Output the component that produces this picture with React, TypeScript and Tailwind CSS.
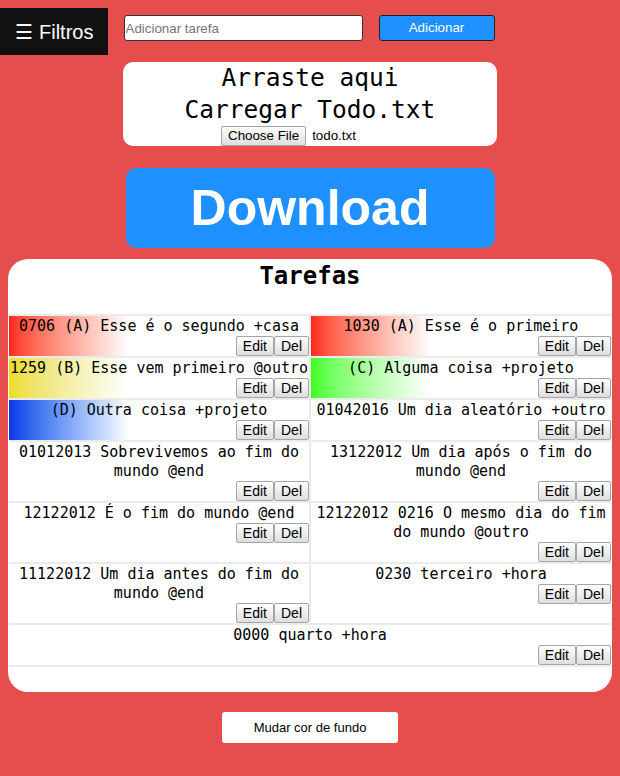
import React from "react";

type Task = { text: string; color?: string; wide?: boolean };

const tasks: Task[] = [
  { text: "0706 (A) Esse é o segundo +casa", color: "red" },
  { text: "1030 (A) Esse é o primeiro", color: "red" },
  { text: "1259 (B) Esse vem primeiro @outro", color: "yellow" },
  { text: "(C) Alguma coisa +projeto", color: "green" },
  { text: "(D) Outra coisa +projeto", color: "blue" },
  { text: "01042016 Um dia aleatório +outro" },
  { text: "01012013 Sobrevivemos ao fim do mundo @end" },
  { text: "13122012 Um dia após o fim do mundo @end" },
  { text: "12122012 É o fim do mundo @end" },
  { text: "12122012 0216 O mesmo dia do fim do mundo @outro" },
  { text: "11122012 Um dia antes do fim do mundo @end" },
  { text: "0230 terceiro +hora" },
  { text: "0000 quarto +hora", wide: true },
];

const bgByColor: Record<string, string> = {
  red: "bg-linear-to-r from-[#ff2419] to-white to-40%",
  yellow: "bg-linear-to-r from-[#ecdc22] to-white to-40%",
  green: "bg-linear-to-r from-[#3aff14] to-white to-40%",
  blue: "bg-linear-to-r from-[#0a36e6] to-white to-40%",
};

const btn =
  "h-5 px-[6px] text-[14px] leading-4 border border-[#a6a6a6] rounded-[2px] bg-linear-to-b from-white to-[#dedede] text-black";

function TaskCell({ task }: { task: Task }) {
  const bg = task.color ? bgByColor[task.color] : "bg-white";
  return (
    <div className={`${bg} ${task.wide ? "col-span-2" : ""} flex flex-col pt-px`}>
      <p className="text-center text-[15px] leading-[19px] text-black">{task.text}</p>
      <div className="flex justify-end" style={{ fontFamily: "'Liberation Sans', Arial, sans-serif" }}>
        <button className={btn}>Edit</button>
        <button className={btn}>Del</button>
      </div>
    </div>
  );
}

export default function App() {
  return (
    <div
      className="relative min-h-[776px] bg-[#e64d4d] pt-[15px] pb-8"
      style={{ fontFamily: "'Liberation Sans', Arial, sans-serif" }}
    >
      <button className="absolute left-0 top-2 h-[47px] w-[108px] bg-[#111111] text-white text-[20px] flex items-center pl-[15px] gap-[6px]">
        <span>☰</span>
        <span>Filtros</span>
      </button>

      <div className="flex justify-center gap-4 pr-[2px]">
        <input
          placeholder="Adicionar tarefa"
          className="h-[26px] w-[239px] rounded-[3px] border border-[#333] bg-white px-px text-[13.33px] text-black placeholder:text-[#757575] outline-none"
        />
        <button className="h-[26px] w-[116px] rounded-[3px] border border-[#222] bg-[#1e90ff] text-[13.33px] text-white">
          Adicionar
        </button>
      </div>

      <div
        className="mx-auto mt-[21px] flex h-[84px] w-[374px] flex-col items-center rounded-[10px] bg-white text-black"
        style={{ fontFamily: "'DejaVu Sans Mono', monospace" }}
      >
        <div className="text-[24.5px] leading-8">Arraste aqui</div>
        <div className="text-[24.5px] leading-8">Carregar Todo.txt</div>
        <div className="flex w-[178px] items-center gap-[6px]" style={{ fontFamily: "'Liberation Sans', Arial, sans-serif" }}>
          <span className="h-5 px-[6px] text-[13.33px] leading-[18px] border border-[#a6a6a6] rounded-[2px] bg-linear-to-b from-white to-[#dedede]">
            Choose File
          </span>
          <span className="text-[13.33px]">todo.txt</span>
        </div>
      </div>

      <button className="mx-auto mt-[22px] flex h-20 w-[369px] items-center justify-center rounded-[10px] bg-[#1e90ff] text-[50px] font-bold text-white">
        Download
      </button>

      <div
        className="mx-2 mt-[11px] rounded-[20px] bg-white pb-[25px]"
        style={{ fontFamily: "'DejaVu Sans Mono', monospace" }}
      >
        <h2 className="pt-[3px] text-center text-[24px] font-bold leading-7 text-black">Tarefas</h2>
        <div className="mx-px mt-[24px] grid grid-cols-2 gap-[2px] bg-[#ebebeb] py-[2px]">
          {tasks.map((t, i) => (
            <TaskCell key={i} task={t} />
          ))}
        </div>
      </div>

      <button className="mx-auto mt-5 block h-[31px] w-44 rounded-[3px] bg-white text-[13px] text-black">
        Mudar cor de fundo
      </button>
    </div>
  );
}
